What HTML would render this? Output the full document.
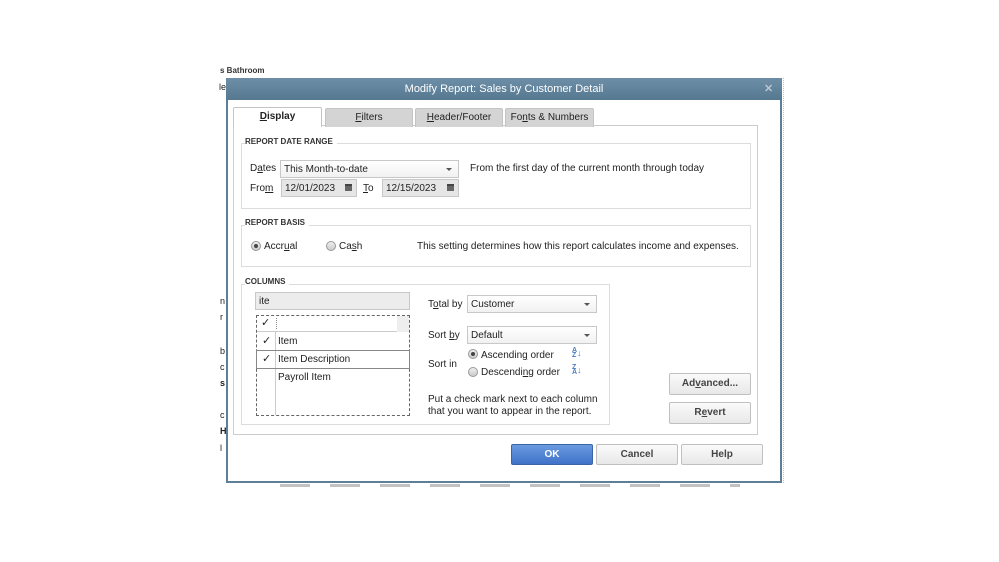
<!DOCTYPE html>
<html><head><style>
*{margin:0;padding:0;box-sizing:border-box}
body{width:999px;height:562px;background:#fff;position:relative;overflow:hidden;font-family:"Liberation Sans",Arial,sans-serif;font-size:10px;color:#222}
.a{position:absolute}
.dlg{left:226px;top:78px;width:556px;height:405px;border:2px solid #5d7f98;border-top:none;background:#fff}
.title{left:226px;top:78px;width:556px;height:22px;background:linear-gradient(#6d8ea6,#557991);color:#fff;font-size:11px;text-align:center;line-height:22px}
.tab{height:19px;background:#d4d4d4;border:1px solid #c4c4c4;border-bottom:none;text-align:center;line-height:18px;font-size:10px;border-radius:2px 2px 0 0}
.box{border:1px solid #dcdcdc}
.lbl{font-size:8px;font-weight:bold;background:#fff;padding-right:4px;color:#333}
.dd{border:1px solid #c8c8c8;background:linear-gradient(#fff,#f1f1f1);padding-left:3px;line-height:17px;font-size:10px}
.dd:after{content:"";position:absolute;right:6px;top:7px;border:3px solid transparent;border-top:3px solid #555}
.fld{border:1px solid #c8c8c8;background:#e6e6e6;padding-left:3px;line-height:17px;font-size:10px}
.cal{position:absolute;right:4px;top:4px;width:7px;height:7px;background:#666;border-top:2px solid #444}
.btn{border:1px solid #c0c0c0;background:linear-gradient(#fafafa,#e8e8e8);text-align:center;font-weight:bold;color:#444;font-size:10px;border-radius:2px}
.rad{width:10px;height:10px;border-radius:50%;border:1px solid #999;background:linear-gradient(#eee,#ccc)}
.rad.on:after{content:"";position:absolute;left:2px;top:2px;width:4px;height:4px;border-radius:50%;background:#444}
.t{white-space:nowrap}
</style></head><body>
<div class="a t" style="left:220px;top:66px;font-size:8px;font-weight:bold;color:#333">s Bathroom</div>
<div class="a t" style="left:219px;top:82px;font-size:9px">le</div>
<div class="a" style="left:783px;top:78px;width:1px;height:405px;border-left:1px dotted #e8b870"></div>
<div class="a t" style="left:220px;top:296px;font-size:9px">n</div>
<div class="a t" style="left:220px;top:312px;font-size:9px">r</div>
<div class="a t" style="left:220px;top:346px;font-size:9px">b</div>
<div class="a t" style="left:220px;top:362px;font-size:9px">c</div>
<div class="a t" style="left:220px;top:378px;font-size:9px;font-weight:bold">s</div>
<div class="a t" style="left:220px;top:410px;font-size:9px">c</div>
<div class="a t" style="left:220px;top:426px;font-size:9px;font-weight:bold">H</div>
<div class="a t" style="left:220px;top:443px;font-size:9px">l</div>
<div class="a" style="left:280px;top:484px;width:460px;height:3px;background:repeating-linear-gradient(90deg,#999 0 30px,#fff 30px 50px);opacity:.6"></div>

<div class="a dlg"></div>
<div class="a title">Modify Report: Sales by Customer Detail</div>
<div class="a" style="left:764px;top:82px;color:#b8c6d2;font-size:11px;font-weight:bold">✕</div>

<div class="a box" style="left:233px;top:125px;width:525px;height:310px;border-color:#ccc"></div>
<div class="a tab" style="left:233px;top:107px;width:89px;height:20px;background:#fff;font-weight:bold"><u>D</u>isplay</div>
<div class="a tab" style="left:325px;top:108px;width:88px"><u>F</u>ilters</div>
<div class="a tab" style="left:415px;top:108px;width:88px"><u>H</u>eader/Footer</div>
<div class="a tab" style="left:505px;top:108px;width:89px">Fo<u>n</u>ts &amp; Numbers</div>

<div class="a box" style="left:241px;top:143px;width:510px;height:66px"></div>
<div class="a lbl t" style="left:245px;top:137px">REPORT DATE RANGE</div>
<div class="a t" style="left:250px;top:163px">D<u>a</u>tes</div>
<div class="a dd" style="left:280px;top:160px;width:179px;height:18px">This Month-to-date</div>
<div class="a t" style="left:470px;top:163px">From the first day of the current month through today</div>
<div class="a t" style="left:250px;top:183px">Fro<u>m</u></div>
<div class="a fld" style="left:281px;top:179px;width:76px;height:18px">12/01/2023<span class="cal"></span></div>
<div class="a t" style="left:363px;top:183px"><u>T</u>o</div>
<div class="a fld" style="left:382px;top:179px;width:77px;height:18px">12/15/2023<span class="cal"></span></div>

<div class="a box" style="left:241px;top:225px;width:510px;height:42px"></div>
<div class="a lbl t" style="left:245px;top:218px">REPORT BASIS</div>
<div class="a rad on" style="left:251px;top:241px"></div>
<div class="a t" style="left:264px;top:241px">Accr<u>u</u>al</div>
<div class="a rad" style="left:326px;top:241px"></div>
<div class="a t" style="left:339px;top:241px">Ca<u>s</u>h</div>
<div class="a t" style="left:417px;top:241px">This setting determines how this report calculates income and expenses.</div>

<div class="a box" style="left:241px;top:284px;width:369px;height:141px"></div>
<div class="a lbl t" style="left:245px;top:277px">COLUMNS</div>
<div class="a fld" style="left:255px;top:292px;width:155px;height:18px;background:#ececec">ite</div>
<div class="a" style="left:256px;top:315px;width:154px;height:101px;border:1px dashed #666;background:#fff"></div>
<div class="a" style="left:257px;top:316px;width:140px;height:16px;border-bottom:1px solid #ccc"></div>
<div class="a" style="left:397px;top:316px;width:12px;height:16px;background:#eee"></div>
<div class="a" style="left:275px;top:332px;width:1px;height:83px;background:#ccc"></div>
<div class="a" style="left:276px;top:318px;width:1px;height:11px;border-left:1px dotted #888"></div>
<div class="a" style="left:256px;top:350px;width:154px;height:19px;border:1px solid #888"></div>
<div class="a t" style="left:261px;top:316px;font-size:11px">✓</div>
<div class="a t" style="left:262px;top:334px;font-size:11px">✓</div>
<div class="a t" style="left:278px;top:336px">Item</div>
<div class="a t" style="left:262px;top:352px;font-size:11px">✓</div>
<div class="a t" style="left:278px;top:354px">Item Description</div>
<div class="a t" style="left:278px;top:372px">Payroll Item</div>

<div class="a t" style="left:428px;top:299px">T<u>o</u>tal by</div>
<div class="a dd" style="left:467px;top:295px;width:130px;height:18px">Customer</div>
<div class="a t" style="left:428px;top:330px">Sort <u>b</u>y</div>
<div class="a dd" style="left:467px;top:326px;width:130px;height:18px">Default</div>
<div class="a t" style="left:428px;top:359px">Sort in</div>
<div class="a rad on" style="left:468px;top:349px"></div>
<div class="a t" style="left:481px;top:350px">Ascendin<u>g</u> order</div>
<div class="a rad" style="left:468px;top:367px"></div>
<div class="a t" style="left:481px;top:367px">Descendi<u>n</u>g order</div>
<div class="a t" style="left:572px;top:348px;font-size:7px;color:#4a7cc0;font-weight:bold;line-height:5px">A<br>Z</div>
<div class="a t" style="left:577px;top:348px;font-size:9px;color:#4a7cc0;font-weight:bold">↓</div>
<div class="a t" style="left:572px;top:365px;font-size:7px;color:#4a7cc0;font-weight:bold;line-height:5px">Z<br>A</div>
<div class="a t" style="left:577px;top:365px;font-size:9px;color:#4a7cc0;font-weight:bold">↓</div>
<div class="a t" style="left:428px;top:394px;line-height:12px">Put a check mark next to each column<br>that you want to appear in the report.</div>

<div class="a btn" style="left:669px;top:373px;width:82px;height:22px;line-height:20px">Ad<u>v</u>anced...</div>
<div class="a btn" style="left:669px;top:402px;width:82px;height:22px;line-height:20px">R<u>e</u>vert</div>

<div class="a btn" style="left:511px;top:444px;width:82px;height:21px;line-height:19px;background:linear-gradient(#6a9ae0,#3f72c8);color:#fff;border-color:#3a64a8">OK</div>
<div class="a btn" style="left:596px;top:444px;width:82px;height:21px;line-height:19px">Cancel</div>
<div class="a btn" style="left:681px;top:444px;width:82px;height:21px;line-height:19px">Help</div>
</body></html>
